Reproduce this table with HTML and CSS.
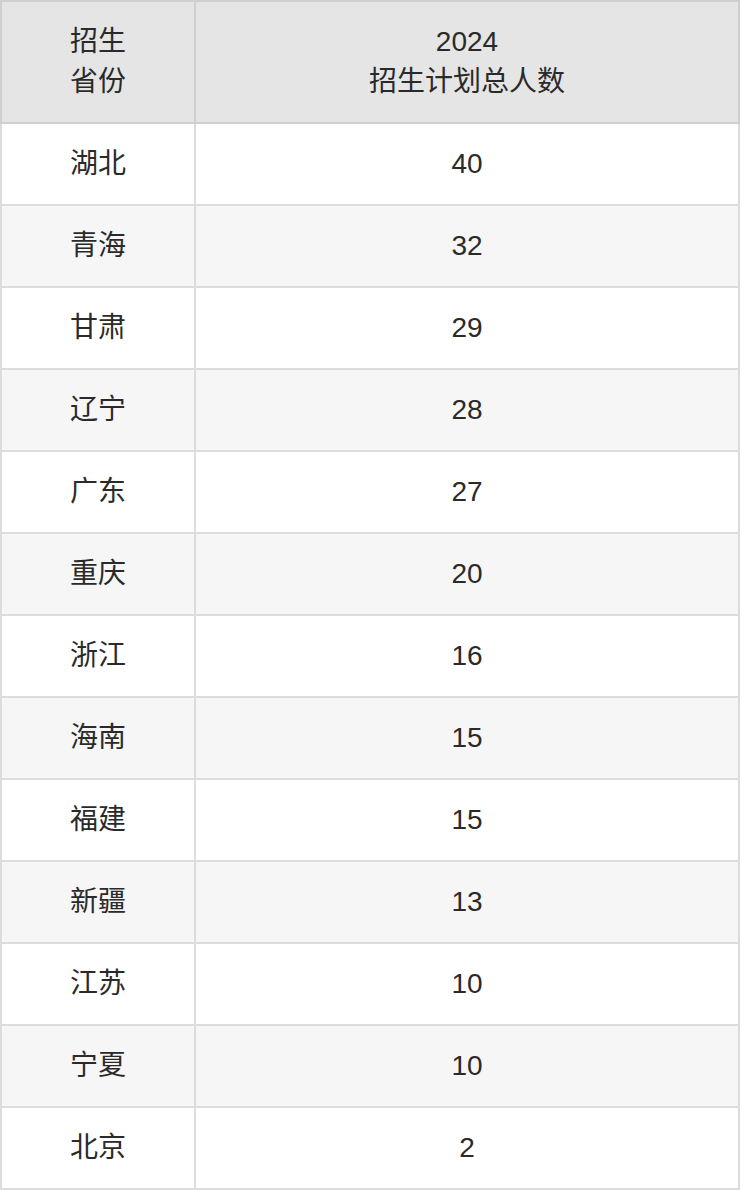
FILE: index.html
```html
<!DOCTYPE html>
<html lang="zh">
<head>
<meta charset="utf-8">
<title>2024 招生计划</title>
<link rel="stylesheet" href="styles.css">
</head>
<body>
<table class="plan">
  <thead>
    <tr>
      <th class="col-prov">招生<br>省份</th>
      <th class="col-num">2024<br>招生计划总人数</th>
    </tr>
  </thead>
  <tbody>
    <tr><td>湖北</td><td>40</td></tr>
    <tr><td>青海</td><td>32</td></tr>
    <tr><td>甘肃</td><td>29</td></tr>
    <tr><td>辽宁</td><td>28</td></tr>
    <tr><td>广东</td><td>27</td></tr>
    <tr><td>重庆</td><td>20</td></tr>
    <tr><td>浙江</td><td>16</td></tr>
    <tr><td>海南</td><td>15</td></tr>
    <tr><td>福建</td><td>15</td></tr>
    <tr><td>新疆</td><td>13</td></tr>
    <tr><td>江苏</td><td>10</td></tr>
    <tr><td>宁夏</td><td>10</td></tr>
    <tr><td>北京</td><td>2</td></tr>
  </tbody>
</table>
</body>
</html>
```
FILE: styles.css
```css
html, body {
  margin: 0;
  padding: 0;
  background: #ffffff;
}

.plan {
  width: 740px;
  border-collapse: collapse;
  table-layout: fixed;
  font-family: "Liberation Sans", "Noto Sans CJK SC", sans-serif;
  font-size: 28px;
  color: #2a2a2a;
  border: 2px solid #d4d4d4;
}

.plan th,
.plan td {
  padding: 0;
  text-align: center;
  vertical-align: middle;
  border: 2px solid #dcdcdc;
  font-weight: normal;
}

.plan thead th {
  height: 120px;
  line-height: 40px;
  background: #e5e5e5;
  border-color: #cfcfcf;
}

.plan .col-prov {
  width: 192px;
}

.plan tbody td {
  height: 80px;
  line-height: 80px;
}

.plan tbody tr:nth-child(odd) td {
  background: #ffffff;
}

.plan tbody tr:nth-child(even) td {
  background: #f6f6f6;
}
```
